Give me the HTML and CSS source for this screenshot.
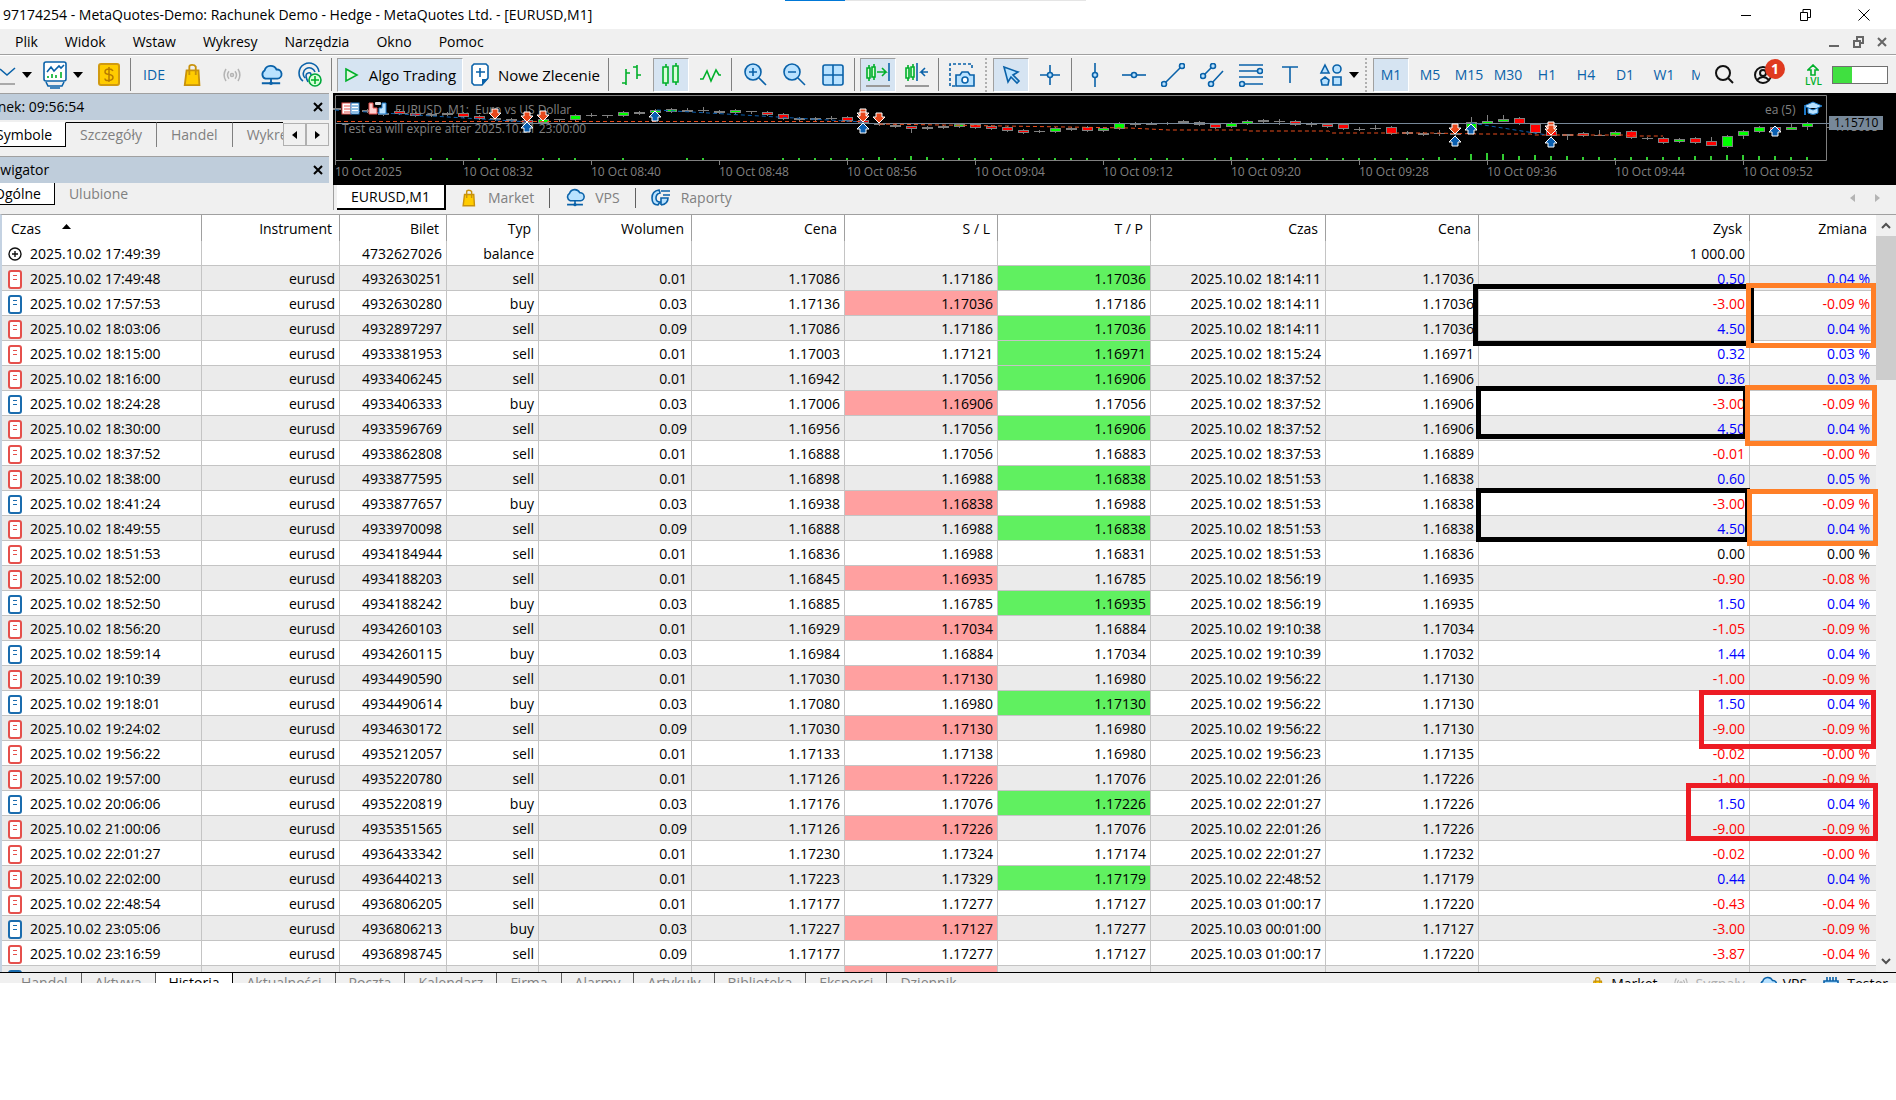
FILE: index.html
```html
<!DOCTYPE html>
<html lang="pl">
<head>
    <meta charset="UTF-8">
    <title>97174254 - MetaQuotes-Demo: Rachunek Demo - Hedge</title>
    <link rel="stylesheet" href="styles.css">
</head>
<body>
    <!-- Wspólne ikony -->
    <svg class="defs">
        <symbol id="i-bag" viewBox="0 0 24 24"><path d="M5 7h13l1 16H3z" fill="#fc0" stroke="#c8920c" stroke-width="2"/><path d="M8 12V3q0-2 3-2t4 2v9" fill="none" stroke="#c8920c" stroke-width="2"/></symbol>
        <symbol id="i-cloud" viewBox="0 0 24 24"><path d="M6 16a5 5 0 0 1-1-9 7 7 0 0 1 13-1 5 5 0 0 1 1 10z" fill="#b9e2ff" stroke="#0a62a9" stroke-width="2"/><path d="M12 16v4M2 21h20" stroke="#0a62a9" stroke-width="2"/><circle cx="12" cy="21" r="2" fill="#0a62a9"/></symbol>
        <symbol id="i-signal" viewBox="0 0 24 24"><g fill="none" stroke="#b4b4b4" stroke-width="2"><circle cx="12" cy="12" r="2"/><path d="M8 7q-4 5 0 10M16 7q4 5 0 10M4 4q-5 8 0 16M20 4q5 8 0 16"/></g></symbol>
        <symbol id="i-caret" viewBox="0 0 10 6"><path d="M0 0h10L5 6z"/></symbol>
        <symbol id="i-sell" viewBox="0 0 14 19"><rect x="1" y="1" width="12" height="17" rx="2" fill="#fff" stroke="#e5504c" stroke-width="2"/><path d="M5 5.500h4M5 9.500h4" stroke="#e5504c"/></symbol>
        <symbol id="i-buy" viewBox="0 0 14 19"><rect x="1" y="1" width="12" height="17" rx="2" fill="#fff" stroke="#1a6cae" stroke-width="2"/><path d="M5 5.500h4M5 9.500h4" stroke="#1a6cae"/></symbol>
        <symbol id="i-balance" viewBox="0 0 14 14"><circle cx="7" cy="7" r="6" fill="#fff" stroke="#111" stroke-width="1.4"/><path d="M7 4v6M4 7h6" stroke="#111" stroke-width="1.4"/></symbol>
    </svg>

    <header class="titlebar">
        <span class="strip"><i></i></span>
        <span class="title">97174254 - MetaQuotes-Demo: Rachunek Demo - Hedge - MetaQuotes Ltd. - [EURUSD,M1]</span>
        <div class="win-buttons">
            <button aria-label="Minimalizuj"><svg width="12" height="12"><path d="M1 6.500h10"/></svg></button>
            <button aria-label="Przywróć"><svg width="12" height="12"><path d="M1.500 3.500h7v8h-7zM4 3V.5h7.500v8H9"/></svg></button>
            <button aria-label="Zamknij"><svg width="12" height="12"><path d="M0.500.5l11 11M11.500.5l-11 11"/></svg></button>
        </div>
    </header>

    <nav class="menubar">
        <button>Plik</button>
        <button>Widok</button>
        <button>Wstaw</button>
        <button>Wykresy</button>
        <button>Narzędzia</button>
        <button>Okno</button>
        <button>Pomoc</button>
        <div class="mdi-buttons">
            <button aria-label="Minimalizuj wykres"><svg width="12" height="12"><path d="M1 10h10"/></svg></button>
            <button aria-label="Przywróć wykres"><svg width="12" height="12"><path d="M2 5h6v6H2zM5 4V1h6v6H9"/></svg></button>
            <button aria-label="Zamknij wykres"><svg width="12" height="12"><path d="M2 2l8 8M10 2l-8 8"/></svg></button>
        </div>
    </nav>

    <div class="toolbar">
        <button class="first" aria-label="Wykres"><svg width="16" height="28"><path d="M0 8l7 6 8-7" class="b"/><path d="M0 23h15" stroke="#aaa" stroke-width="2"/></svg><svg class="caret"><use href="#i-caret"/></svg></button>
        <button class="wide" aria-label="Nowy wykres"><svg width="24" height="30"><rect x="1" y="2" width="22" height="19" rx="2" class="b w"/><path d="M4 12l4-5 3 4 5-5 2 2 3-3" class="b"/><path d="M5 18v-2M9 18v-4M13 18v-3M18 18v-6" class="g"/><path d="M3 22l2 4h14l2-4M7 28h10" class="b"/></svg><svg class="caret"><use href="#i-caret"/></svg></button>
        <button aria-label="Instrumenty"><svg width="22" height="24"><rect x="1" y="1" width="20" height="21" rx="2" fill="#fc0" stroke="#d19a10" stroke-width="2"/><path d="M11 4v15M15 8q-1-2-4-2-4 0-4 3 0 2 4 2.500t4 3-4 3-4-2" fill="none" stroke="#b87b00" stroke-width="1.500"/></svg></button>
        <span class="sep"></span>
        <button class="ide">IDE</button>
        <button aria-label="Market"><svg width="22" height="24"><use href="#i-bag"/></svg></button>
        <button aria-label="Sygnały"><svg width="24" height="18"><use href="#i-signal"/></svg></button>
        <button aria-label="VPS"><svg width="24" height="22"><use href="#i-cloud"/></svg></button>
        <button aria-label="MQL5 ID"><svg width="26" height="26"><path d="M6 19a10 10 0 1 1 16-9M8 16a6 6 0 1 1 10-6M11 20q-4-8 0-9 3-1 3 2" class="b"/><circle cx="18" cy="18" r="6" fill="#d9ffd9" stroke="#00a83a" stroke-width="1.600"/><path d="M18 14v8M14 18h8" class="g"/></svg></button>
        <span class="sep"></span>
        <button class="text on"><svg width="16" height="18"><path d="M2 3l11 6-11 6z" fill="#dff7df" stroke="#00b02a" stroke-width="1.600"/></svg>Algo Trading</button>
        <button class="text"><svg width="18" height="23"><path d="M3 1h12l2 2v12l-6 7H3l-2-2V3z" class="b w"/><path d="M9 5v9M5 9h9" class="b"/><path d="M11 22v-6h6z" fill="#0a62a9"/></svg>Nowe Zlecenie</button>
        <span class="sep"></span>
        <button aria-label="Słupki"><svg width="24" height="24"><path d="M6 6v16M2 20h4M6 10h4M17 2v14M13 4h4M17 12h4" class="g"/></svg></button>
        <button class="on" aria-label="Świece"><svg width="24" height="24"><path d="M7 1v22M17 0v22" class="g"/><path d="M4 4h5v16H4zM14 3h5v16h-5z" class="g f"/></svg></button>
        <button aria-label="Linia"><svg width="24" height="24"><path d="M2 16h3l4-8 4 10 5-11 3 5h2" class="g"/></svg></button>
        <span class="sep"></span>
        <button aria-label="Powiększ"><svg width="24" height="24"><circle cx="10" cy="9" r="8" class="b f"/><path d="M16 15l7 7M10 5v8M6 9h8" class="b"/></svg></button>
        <button aria-label="Pomniejsz"><svg width="24" height="24"><circle cx="10" cy="9" r="8" class="b f"/><path d="M16 15l7 7M6 9h8" class="b"/></svg></button>
        <button aria-label="Siatka"><svg width="24" height="24"><rect x="2" y="2" width="20" height="20" rx="2" class="b f"/><path d="M12 2v20M2 12h20" class="b"/></svg></button>
        <span class="sep"></span>
        <button class="on" aria-label="Przewijanie"><svg width="26" height="26"><path d="M4 3v16M9 2v16M12 10h9l-4-4M21 10l-4 4" class="g"/><path d="M2 6h3v10H2zM7 5h3v10H7z" class="g f"/><path d="M24 1v18" class="b"/><path d="M1 24h24" stroke="#999" stroke-width="2"/></svg></button>
        <button aria-label="Przesunięcie"><svg width="26" height="26"><path d="M4 3v16M9 2v16" class="g"/><path d="M2 6h3v10H2zM7 5h3v10H7z" class="g f"/><path d="M13 1v18M24 10h-7l4-4M17 10l4 4" class="b"/><path d="M1 24h24" stroke="#999" stroke-width="2"/></svg></button>
        <span class="sep"></span>
        <button aria-label="Zrzut ekranu"><svg width="26" height="26"><path d="M6 24H1V2h22v6" class="b" stroke-dasharray="3 2"/><path d="M7 13h4l2-3h6l2 3h4v11H7z" class="b f"/><circle cx="16" cy="18" r="3" class="b w"/></svg></button>
        <span class="grip"></span>
        <button class="on" aria-label="Kursor"><svg width="24" height="24"><path d="M5 4l4 15 3-5 6 6 2-2-6-6 5-3z" class="b f"/></svg></button>
        <button aria-label="Krzyż"><svg width="24" height="24"><path d="M12 2v20M2 12h20" class="b"/><circle cx="12" cy="12" r="2.500" class="b f"/></svg></button>
        <span class="sep"></span>
        <button aria-label="Linia pionowa"><svg width="24" height="24"><path d="M12 0v24" class="b"/><circle cx="12" cy="12" r="2.500" class="b f"/></svg></button>
        <button aria-label="Linia pozioma"><svg width="24" height="24"><path d="M0 12h24" class="b"/><circle cx="12" cy="12" r="2.500" class="b f"/></svg></button>
        <button aria-label="Linia trendu"><svg width="24" height="24"><path d="M3 21L21 3" class="b"/><circle cx="3" cy="21" r="2.500" class="b f"/><circle cx="21" cy="3" r="2.500" class="b f"/></svg></button>
        <button aria-label="Kanał"><svg width="24" height="24"><path d="M3 13L13 3M11 21L23 8" class="b"/><circle cx="3" cy="13" r="2.500" class="b f"/><circle cx="13" cy="3" r="2.500" class="b f"/><circle cx="11" cy="21" r="2.500" class="b f"/></svg></button>
        <button aria-label="Fibonacci"><svg width="24" height="24"><path d="M0 2h24M0 8h24M0 14h24M0 21h24" class="b"/><circle cx="21" cy="8" r="2.500" class="b f"/><circle cx="3" cy="21" r="2.500" class="b f"/></svg></button>
        <button aria-label="Tekst"><svg width="24" height="24"><path d="M4 4h16M12 4v16" class="b"/></svg></button>
        <button class="shapes" aria-label="Kształty"><svg width="24" height="24"><path d="M6 2l4 8H2zM6 14l4 3-1 5H3l-1-5zM14 14h8v8h-8z" class="b f"/><circle cx="18" cy="6" r="4" class="b f"/></svg><svg class="caret"><use href="#i-caret"/></svg></button>
        <span class="grip"></span>
        <button class="tf on">M1</button>
        <button class="tf">M5</button>
        <button class="tf">M15</button>
        <button class="tf">M30</button>
        <button class="tf">H1</button>
        <button class="tf">H4</button>
        <button class="tf">D1</button>
        <button class="tf">W1</button>
        <button class="tf cut">MN</button>
        <div class="status">
            <button aria-label="Szukaj"><svg width="20" height="20"><circle cx="8" cy="8" r="7"/><path d="M13 13l5 5"/></svg></button>
            <button class="user" aria-label="Konto"><svg width="20" height="20"><circle cx="10" cy="10" r="8"/><circle cx="10" cy="8" r="3"/><path d="M4 15q6-6 12 0"/></svg><span class="badge">1</span></button>
            <div class="lvl"><svg width="12" height="12"><path d="M6 1L1 6h3v5h4V6h3z" class="g"/></svg>LVL</div>
            <div class="meter"><i></i></div>
        </div>
    </div>

    <div class="workspace">
        <aside class="dock">
            <div class="dock-title">Rynek: 09:56:54<button aria-label="Zamknij rynek"><svg width="10" height="10"><path d="M1 1l8 8M9 1l-8 8"/></svg></button></div>
            <div class="dock-tabs">
                <button class="active">Symbole</button>
                <button>Szczegóły</button>
                <button>Handel</button>
                <button class="last">Wykres</button>
                <div class="spin">
                    <button aria-label="W lewo"><svg width="5" height="8"><path d="M5 0v8L0 4z"/></svg></button>
                    <button aria-label="W prawo"><svg width="5" height="8"><path d="M0 0v8l5-4z"/></svg></button>
                </div>
            </div>
            <div class="dock-title">Nawigator<button aria-label="Zamknij nawigator"><svg width="10" height="10"><path d="M1 1l8 8M9 1l-8 8"/></svg></button></div>
            <div class="dock-tabs low">
                <button class="active">Ogólne</button>
                <button>Ulubione</button>
            </div>
        </aside>

        <main class="chart-pane">
            <div class="chart">
                <svg id="chart" width="1563" height="92"></svg>
            </div>
            <div class="chart-tabs">
                <button class="active">EURUSD,M1</button>
                <button><svg width="17" height="18"><use href="#i-bag"/></svg>Market</button>
                <button><svg width="20" height="19"><use href="#i-cloud"/></svg>VPS</button>
                <button><svg width="20" height="18"><path d="M8 1q-7 1-7 8t6 7l2-3q-4 0-4-4t4-5zM10 16V9h7q0 6-7 7M10 2h9M12 6h7" class="b f"/></svg>Raporty</button>
                <span class="pager"><svg width="30" height="8"><path d="M5 0v8L0 4zM25 0v8l5-4z" fill="#b4b4b4"/></svg></span>
            </div>
        </main>
    </div>

    <section class="history">
        <table>
            <colgroup>
                <col class="c-time"><col class="c-symbol"><col class="c-ticket"><col class="c-type">
                <col class="c-num"><col class="c-num"><col class="c-num"><col class="c-num">
                <col class="c-close"><col class="c-num"><col><col class="c-change">
            </colgroup>
            <thead>
                <tr>
                    <th>Czas <svg width="9" height="5"><path d="M0 5h9L4.500 0z"/></svg></th>
                    <th>Instrument</th>
                    <th>Bilet</th>
                    <th>Typ</th>
                    <th>Wolumen</th>
                    <th>Cena</th>
                    <th>S / L</th>
                    <th>T / P</th>
                    <th>Czas</th>
                    <th>Cena</th>
                    <th>Zysk</th>
                    <th>Zmiana</th>
                </tr>
            </thead>
            <tbody id="deals"></tbody>
        </table>
        <div class="scrollbar">
            <button aria-label="W górę"><svg width="10" height="7"><path d="M1 6l4-4 4 4"/></svg></button>
            <div class="thumb"></div>
            <button aria-label="W dół"><svg width="10" height="7"><path d="M1 1l4 4 4-4"/></svg></button>
        </div>
        <div class="mark black m1"></div>
        <div class="mark black m2"></div>
        <div class="mark black m3"></div>
        <div class="mark orange m4"></div>
        <div class="mark orange m5"></div>
        <div class="mark orange m6"></div>
        <div class="mark red m7"></div>
        <div class="mark red m8"></div>
    </section>

    <footer class="toolbox">
        <button>Handel</button>
        <button>Aktywa</button>
        <button class="active">Historia</button>
        <button>Aktualności</button>
        <button>Poczta</button>
        <button>Kalendarz</button>
        <button>Firma</button>
        <button>Alarmy</button>
        <button>Artykuły</button>
        <button>Biblioteka</button>
        <button>Eksperci</button>
        <button>Dziennik</button>
        <div class="services">
            <span><svg width="14" height="16"><use href="#i-bag"/></svg>Market</span>
            <span class="off"><svg width="18" height="14"><use href="#i-signal"/></svg>Sygnały</span>
            <span><svg width="18" height="18"><use href="#i-cloud"/></svg>VPS</span>
            <span><svg width="20" height="18"><path d="M3 5h14v12H3zM6 1v4M9 1v4M12 1v4M15 1v4" class="b f"/></svg>Tester</span>
        </div>
    </footer>

    <script src="script.js"></script>
</body>
</html>
```
FILE: styles.css
```css
* {
    box-sizing: border-box;
}
body {
    margin: 0;
    background-color: #fff;
    color: #000;
    font-family: "Open Sans", "Noto Sans", sans-serif;
    font-size: 14px;
    line-height: 20px;
    overflow: hidden;
}
button {
    padding: 0;
    border: 0;
    background: none;
    color: inherit;
    font: inherit;
    white-space: nowrap;
}
svg {
    flex: none;
    display: block;
}
.defs {
    display: none;
}
.b {
    fill: none;
    stroke: #0a62a9;
    stroke-width: 1.6;
}
.g {
    fill: none;
    stroke: #00b02a;
    stroke-width: 1.6;
}
.f {
    fill: #b9e2ff;
}
.g.f {
    fill: #d9ffd9;
}
.w {
    fill: #fff;
}

/* Pasek tytułu i menu */
.titlebar {
    position: relative;
    display: flex;
    align-items: center;
    height: 29px;
    padding: 0 26px 0 3px;
}
.strip {
    position: absolute;
    top: 0;
    left: 785px;
    width: 301px;
    height: 1px;
    background-color: #e5e5e5;
}
.strip i {
    display: block;
    width: 60px;
    height: 1px;
    background-color: #0078d7;
}
.win-buttons, .mdi-buttons {
    display: flex;
    margin-left: auto;
}
.win-buttons {
    gap: 47px;
}
.win-buttons svg {
    fill: none;
    stroke: #000;
}
.menubar {
    display: flex;
    align-items: center;
    gap: 27px;
    height: 26px;
    padding: 0 8px 0 15px;
    background-color: #f0f0f0;
    border-bottom: 1px solid #a0a0a0;
}
.mdi-buttons {
    gap: 12px;
}
.mdi-buttons svg {
    fill: none;
    stroke: #666;
    stroke-width: 2;
}

/* Pasek narzędzi */
.toolbar {
    display: flex;
    align-items: center;
    gap: 3px;
    height: 38px;
    background-color: #f0f0f0;
    border-top: 1px solid #fff;
}
.toolbar > button {
    display: flex;
    flex: none;
    align-items: center;
    justify-content: center;
    gap: 6px;
    width: 36px;
    height: 34px;
}
.toolbar > .first {
    width: 35px;
    justify-content: flex-start;
}
.toolbar > .wide {
    width: 50px;
}
.toolbar > .shapes {
    width: 49px;
    padding-left: 6px;
}
.toolbar > .text {
    gap: 9px;
    width: 126px;
    font-size: 15px;
}
.toolbar > .text + .text {
    width: 139px;
}
.toolbar > .on {
    background-color: #d6e4f2;
    border: 1px solid #a0a0a0;
    border-right-color: #fff;
    border-bottom-color: #fff;
}
.toolbar .caret {
    width: 10px;
    height: 6px;
}
.sep {
    flex: none;
    width: 3px;
    height: 33px;
    border-left: 1px solid #808080;
}
.grip {
    flex: none;
    width: 3px;
    height: 34px;
    margin: 0 2px;
    border-left: 2px dotted #b0b0b0;
}
.ide, .tf {
    color: #0a62a9;
}
.toolbar > .cut {
    width: 9px;
    margin-left: 6px;
    overflow: hidden;
    justify-content: flex-start;
}
.status {
    display: flex;
    align-items: center;
    margin-left: auto;
    padding-right: 8px;
}
.status button svg {
    fill: none;
    stroke: #111;
    stroke-width: 2;
}
.user {
    position: relative;
    margin: 0 32px 0 18px;
}
.badge {
    position: absolute;
    top: -6px;
    left: 12px;
    width: 20px;
    height: 20px;
    border-radius: 10px;
    background-color: #e03a20;
    color: #fff;
    font-weight: bold;
}
.lvl {
    display: flex;
    flex-direction: column;
    align-items: center;
    margin-right: 10px;
    color: #00b02a;
    font-size: 10px;
    font-weight: 600;
    line-height: 10px;
}
.meter {
    width: 56px;
    height: 18px;
    border: 1px solid #707070;
    background-color: #fff;
}
.meter i {
    display: block;
    width: 35%;
    height: 100%;
    background-color: #40e040;
}

/* Panele i wykres */
.workspace {
    display: flex;
    height: 121px;
    background-color: #f0f0f0;
    overflow: hidden;
}
.dock {
    flex: none;
    width: 353px;
    margin-left: -24px;
}
.dock-title {
    display: flex;
    align-items: center;
    justify-content: space-between;
    height: 27px;
    padding: 0 6px;
    background-color: #bfcddb;
    border-top: 1px solid #a0a0a0;
}
.dock-title svg {
    fill: none;
    stroke: #000;
    stroke-width: 2;
}
.dock-tabs {
    display: flex;
    align-items: flex-start;
    height: 36px;
    padding-top: 2px;
    color: #808080;
}
.dock-tabs > button {
    height: 25px;
    padding: 0 14px;
    border-top: 1px solid #000;
    border-right: 1px solid #808080;
}
.dock-tabs > .active {
    padding: 0 13px 0 19px;
    background-color: #fff;
    border: 1px solid #000;
    border-top-color: #fff;
    color: #000;
}
.dock-tabs .last {
    flex: 1;
    width: 0;
    padding-right: 0;
    border-right: 0;
    overflow: hidden;
    text-align: left;
}
.spin {
    display: flex;
    margin-top: 1px;
}
.spin button {
    display: flex;
    align-items: center;
    justify-content: center;
    width: 23px;
    height: 23px;
    border: 1px solid #b0b0b0;
}
.low {
    padding-top: 0;
}
.low > button {
    height: 22px;
    border-top: 0;
    border-right: 0;
}
.dock-tabs.low > .active {
    padding-left: 17px;
    border-top: 0;
}
.chart-pane {
    flex: 1;
    min-width: 0;
    margin-left: 4px;
}
.chart {
    height: 92px;
    background-color: #000;
    overflow: hidden;
}
.chart text {
    fill: #808080;
    font-size: 12px;
}
.chart .price {
    fill: #000;
}
.chart-tabs {
    display: flex;
    align-items: center;
    height: 25px;
    border-left: 1px solid #a0a0a0;
    color: #808080;
    padding: 0 16px 0 3px;
}
.chart-tabs button {
    display: flex;
    align-items: center;
    gap: 10px;
    height: 20px;
    padding: 0 15px;
    border-right: 1px solid #606060;
}
.chart-tabs button:nth-of-type(4) {
    border-right: 0;
}
.chart-tabs .active {
    height: 25px;
    padding: 0 14px;
    background-color: #fff;
    border-right: 2px solid #000;
    border-bottom: 2px solid #000;
    color: #000;
}
.pager {
    margin-left: auto;
}

/* Historia transakcji */
.history {
    position: relative;
    display: flex;
    max-height: 758px;
    overflow: hidden;
    border-top: 1px solid #a0a0a0;
    border-left: 2px solid #c4d2e2;
}
.history table {
    flex: 1;
    table-layout: fixed;
    border-collapse: separate;
    border-spacing: 0;
    text-align: right;
}
.c-time { width: 200px; }
.c-symbol { width: 138px; }
.c-ticket { width: 107px; }
.c-type { width: 92px; }
.c-num { width: 153px; }
.c-close { width: 175px; }
.c-change { width: 126px; }
.history th {
    height: 26px;
    padding: 2px 7px 0 9px;
    border-right: 1px solid #a0a0a0;
    font-weight: normal;
}
.history th:first-child {
    text-align: left;
}
.history th svg {
    display: inline-block;
    margin: 0 0 5px 18px;
}
.history td {
    height: 25px;
    padding: 2px 4px 0 6px;
    border-right: 1px solid #c4c4c4;
    border-bottom: 1px solid #c4c4c4;
    white-space: nowrap;
}
.history th:last-child {
    padding-right: 9px;
    border-right: 0;
}
.history td:last-child {
    padding-right: 6px;
    border-right: 0;
}
.history tr:nth-child(even) td {
    background-color: #ebebeb;
}
.history .deal-time {
    display: flex;
    align-items: center;
    gap: 8px;
}
.history tr:nth-child(n) .sl-hit {
    background-color: #ffa0a0;
}
.history tr:nth-child(n) .tp-hit {
    background-color: #60f060;
}
.plus {
    color: #00f;
}
.minus {
    color: #f00;
}
.scrollbar {
    display: flex;
    flex-direction: column;
    width: 20px;
    max-height: 757px;
    background-color: #f0f0f0;
}
.scrollbar button {
    display: flex;
    align-items: center;
    justify-content: center;
    height: 21px;
}
.scrollbar button:last-child {
    margin-top: auto;
}
.scrollbar svg {
    fill: none;
    stroke: #505050;
    stroke-width: 2;
}
.thumb {
    height: 144px;
    background-color: #cdcdcd;
}

/* Zaznaczenia na tabeli */
.mark {
    position: absolute;
    border: 5px solid;
}
.black { border-color: #000; }
.orange { border-color: #ff7f27; }
.red { border-color: #ed1c24; }
.m1 { top: 69px; right: 142px; width: 281px; height: 62px; }
.m2 { top: 171px; right: 148px; width: 272px; height: 53px; }
.m3 { top: 273px; right: 146px; width: 274px; height: 54px; }
.m4 { top: 68px; right: 20px; width: 130px; height: 65px; }
.m5 { top: 170px; right: 19px; width: 132px; height: 61px; }
.m6 { top: 274px; right: 18px; width: 131px; height: 57px; }
.m7 { top: 475px; right: 20px; width: 177px; height: 59px; }
.m8 { top: 568px; right: 18px; width: 192px; height: 58px; }

/* Dolne zakładki, ucięte krawędzią okna */
.toolbox {
    display: flex;
    align-items: flex-start;
    height: 11px;
    padding-left: 8px;
    overflow: hidden;
    background-color: #f0f0f0;
    border-top: 1px solid #000;
    color: #808080;
}
.toolbox > button {
    height: 20px;
    padding: 0 13px;
    border-right: 1px solid #606060;
}
.toolbox > .active {
    background-color: #fff;
    border-right-color: #000;
    color: #000;
}
.toolbox > button:nth-child(12) {
    border-right: 0;
}
.services {
    display: flex;
    gap: 14px;
    margin-left: auto;
    padding: 1px 8px 0 0;
    color: #000;
}
.services span {
    display: flex;
    gap: 6px;
}
.services svg {
    margin-top: 2px;
}
.services .off {
    color: #b0b0b0;
}
```
FILE: script.js
```js
// czas | bilet | typ | wolumen | cena | S/L | T/P | czas zamknięcia | cena | zysk | zmiana
const deals = `
2025.10.02 17:49:39|4732627026|balance||||||| 1 000.00|
2025.10.02 17:49:48|4932630251|sell|0.01|1.17086|1.17186|1.17036|2025.10.02 18:14:11|1.17036|0.50|0.04
2025.10.02 17:57:53|4932630280|buy|0.03|1.17136|1.17036|1.17186|2025.10.02 18:14:11|1.17036|-3.00|-0.09
2025.10.02 18:03:06|4932897297|sell|0.09|1.17086|1.17186|1.17036|2025.10.02 18:14:11|1.17036|4.50|0.04
2025.10.02 18:15:00|4933381953|sell|0.01|1.17003|1.17121|1.16971|2025.10.02 18:15:24|1.16971|0.32|0.03
2025.10.02 18:16:00|4933406245|sell|0.01|1.16942|1.17056|1.16906|2025.10.02 18:37:52|1.16906|0.36|0.03
2025.10.02 18:24:28|4933406333|buy|0.03|1.17006|1.16906|1.17056|2025.10.02 18:37:52|1.16906|-3.00|-0.09
2025.10.02 18:30:00|4933596769|sell|0.09|1.16956|1.17056|1.16906|2025.10.02 18:37:52|1.16906|4.50|0.04
2025.10.02 18:37:52|4933862808|sell|0.01|1.16888|1.17056|1.16883|2025.10.02 18:37:53|1.16889|-0.01|-0.00
2025.10.02 18:38:00|4933877595|sell|0.01|1.16898|1.16988|1.16838|2025.10.02 18:51:53|1.16838|0.60|0.05
2025.10.02 18:41:24|4933877657|buy|0.03|1.16938|1.16838|1.16988|2025.10.02 18:51:53|1.16838|-3.00|-0.09
2025.10.02 18:49:55|4933970098|sell|0.09|1.16888|1.16988|1.16838|2025.10.02 18:51:53|1.16838|4.50|0.04
2025.10.02 18:51:53|4934184944|sell|0.01|1.16836|1.16988|1.16831|2025.10.02 18:51:53|1.16836|0.00|0.00
2025.10.02 18:52:00|4934188203|sell|0.01|1.16845|1.16935|1.16785|2025.10.02 18:56:19|1.16935|-0.90|-0.08
2025.10.02 18:52:50|4934188242|buy|0.03|1.16885|1.16785|1.16935|2025.10.02 18:56:19|1.16935|1.50|0.04
2025.10.02 18:56:20|4934260103|sell|0.01|1.16929|1.17034|1.16884|2025.10.02 19:10:38|1.17034|-1.05|-0.09
2025.10.02 18:59:14|4934260115|buy|0.03|1.16984|1.16884|1.17034|2025.10.02 19:10:39|1.17032|1.44|0.04
2025.10.02 19:10:39|4934490590|sell|0.01|1.17030|1.17130|1.16980|2025.10.02 19:56:22|1.17130|-1.00|-0.09
2025.10.02 19:18:01|4934490614|buy|0.03|1.17080|1.16980|1.17130|2025.10.02 19:56:22|1.17130|1.50|0.04
2025.10.02 19:24:02|4934630172|sell|0.09|1.17030|1.17130|1.16980|2025.10.02 19:56:22|1.17130|-9.00|-0.09
2025.10.02 19:56:22|4935212057|sell|0.01|1.17133|1.17138|1.16980|2025.10.02 19:56:23|1.17135|-0.02|-0.00
2025.10.02 19:57:00|4935220780|sell|0.01|1.17126|1.17226|1.17076|2025.10.02 22:01:26|1.17226|-1.00|-0.09
2025.10.02 20:06:06|4935220819|buy|0.03|1.17176|1.17076|1.17226|2025.10.02 22:01:27|1.17226|1.50|0.04
2025.10.02 21:00:06|4935351565|sell|0.09|1.17126|1.17226|1.17076|2025.10.02 22:01:26|1.17226|-9.00|-0.09
2025.10.02 22:01:27|4936433342|sell|0.01|1.17230|1.17324|1.17174|2025.10.02 22:01:27|1.17232|-0.02|-0.00
2025.10.02 22:02:00|4936440213|sell|0.01|1.17223|1.17329|1.17179|2025.10.02 22:48:52|1.17179|0.44|0.04
2025.10.02 22:48:54|4936806205|sell|0.01|1.17177|1.17277|1.17127|2025.10.03 01:00:17|1.17220|-0.43|-0.04
2025.10.02 23:05:06|4936806213|buy|0.03|1.17227|1.17127|1.17277|2025.10.03 00:01:00|1.17127|-3.00|-0.09
2025.10.02 23:16:59|4936898745|sell|0.09|1.17177|1.17277|1.17127|2025.10.03 01:00:17|1.17220|-3.87|-0.04
2025.10.03 00:01:00|4937104512|buy|0.03|1.17127|1.17027|1.17177|2025.10.03 01:12:40|1.17027|-3.00|-0.09
`.trim().split('\n').map(line => line.split('|'));

function signClass(value) {
    const n = parseFloat(value);
    return n > 0 ? 'plus' : n < 0 || value.startsWith('-') ? 'minus' : '';
}

function fillDeals() {
    document.getElementById('deals').innerHTML = deals.map(d => {
        const [time, ticket, type, volume, price, sl, tp, closeTime, close, profit, change] = d;
        const isBalance = type === 'balance';
        const size = isBalance ? 'width="14" height="14"' : 'width="14" height="19"';
        return `
            <tr>
                <td><div class="deal-time"><svg ${size}><use href="#i-${type}"/></svg>${time}</div></td>
                <td>${isBalance ? '' : 'eurusd'}</td>
                <td>${ticket}</td>
                <td>${type}</td>
                <td>${volume}</td>
                <td>${price}</td>
                <td class="${sl && sl === close ? 'sl-hit' : ''}">${sl}</td>
                <td class="${tp && tp === close ? 'tp-hit' : ''}">${tp}</td>
                <td>${closeTime}</td>
                <td>${close}</td>
                <td class="${isBalance ? '' : signClass(profit)}">${profit}</td>
                <td class="${signClass(change)}">${change ? change + ' %' : ''}</td>
            </tr>`;
    }).join('');
}

// świeca: kolor (g, r, n), góra, wysokość, opcjonalnie zakres knota
const candles = `n15,2 n16,2 n17,2 n20,2 r18,3 r20,3 n21,2 n20,2 r20,4 r23,3 n25,2 n26,2 r27,3 g26,4 n26,1,26,29
g22,5,21,28 n22,1,20,24 n22,1,22,25 g19,4 n19,2 g17,3 g16,3 n17,2,15,19 n17,1,14,20 n18,2 g17,3 n18,1,18,21 r19,3 r21,5 n25,2
n25,2 n25,1,23,27 r24,4 r27,3 n30,2 n32,2 r33,3,33,40 n34,2 n33,2 g31,3 r31,4 r33,3 r34,4 r37,3 n38,1,37,40
g35,4 n35,2 r34,4 g35,3 g30,6 n31,1,29,34 n31,1,29,32 n30,1,29,32 n28,2 r29,3 r31,4 g30,4 g28,3 n27,2 n28,1,26,32
r28,4 n31,1,29,34 r31,3 r31,5 n36,1,34,38 n35,1,32,37 r34,7 n39,2 n40,2 n40,1,37,43 n40,2 g29,7,24,36 g28,3,22,31 g26,3,22,29 r25,6
r31,9 r38,5 n41,2,41,47 r40,3 n42,1,37,43 g39,4 r38,7 n45,1,44,47 r45,5 g46,3 r45,5 r48,5,44,53 g43,11 g38,5,37,46
g34,5 r34,4 g34,3,31,37 g30,4,29,37`.split(/\s+/);

const volumes = '020200220220022200200022000022222232432222022222022222023222222222222326764544332333344554433'.split('');

// znaczniki transakcji: numer świecy i wierzchołek grota
const sells = [[10, 26], [12, 29], [13, 28], [33, 26], [33, 29], [34, 30], [70, 41], [76, 39], [76, 42]];
const buys = [[12, 29], [20, 18], [33, 30], [70, 43], [71, 31], [76, 44], [90, 33]];

const hours = ['2025', '08:32', '08:40', '08:48', '08:56', '09:04', '09:12', '09:20', '09:28', '09:36', '09:44', '09:52'];
const colors = { g: '#00ff00', r: '#ff0000', n: '#808080' };
const candleX = i => 2 + i * 16;

function drawChart() {
    let out = '<path d="M2.500 67V2.500H1493.500V67.500H2.500" fill="none" stroke="#808080"/>';

    hours.forEach((label, i) => {
        const x = 2 + i * 128;
        out += `<path d="M${x + 0.5} 67v5" stroke="#808080"/><text x="${x}" y="83">10 Oct ${label}</text>`;
    });

    volumes.forEach((v, i) => {
        if (v > 0) out += `<path d="M${candleX(i)} 67v-${v}" stroke="#32cd32" stroke-width="2"/>`;
    });

    out += '<text x="62" y="21" xml:space="preserve">EURUSD, M1:  Euro vs US Dollar</text>';
    out += '<text x="9" y="40">Test ea will expire after 2025.10.31 23:00:00</text>';
    out += '<text x="1432" y="21">ea (5)</text>';

    candles.forEach((c, i) => {
        const [y, h, wickTop, wickEnd] = c.slice(1).split(',').map(Number);
        const x = candleX(i);
        const top = wickTop === undefined ? y - 1 : wickTop;
        const end = wickEnd === undefined ? y + h + 1 : wickEnd;
        out += `<path d="M${x + 0.5} ${top}V${end}" stroke="#808080"/>`;
        out += `<rect x="${x - 5}" y="${y}" width="11" height="${h}" fill="#808080"/>`;
        if (c[0] !== 'n') out += `<rect x="${x - 4}" y="${y + 1}" width="9" height="${Math.max(h - 2, 1)}" fill="${colors[c[0]]}"/>`;
    });

    out += '<path d="M2 30.500H1497" stroke="#778899"/>';
    out += '<path d="M4 28.500H530M546 31l250 4 40 2h80v1h80l2 2h100l50 1h50l2 1h90l10 1h30" fill="none" stroke="#e84c1c" stroke-dasharray="4 3"/>';
    out += '<path d="M2 17L196 29M324 17l206 12M1138 30l76 12" stroke="#0a5fb0" stroke-dasharray="4 3"/>';

    sells.forEach(([i, y]) => {
        out += `<path d="M${candleX(i)} ${y}l-6-6h3v-4h6v4h3z" fill="#e8481c" stroke="#fff"/>`;
    });
    buys.forEach(([i, y]) => {
        out += `<path d="M${candleX(i)} ${y}l-6 6h3v4h6v-4h3z" fill="#0a5fb0" stroke="#fff"/>`;
    });

    // ikony obok nazwy instrumentu
    out += '<rect x="9" y="10" width="9" height="11" fill="#fff" stroke="#e5504c"/><rect x="18" y="10" width="8" height="11" fill="#fff" stroke="#1a78c8"/>';
    out += '<path d="M11 13h6M11 16h6M11 19h6" stroke="#e5504c"/><path d="M19 13h6M19 16h6M19 19h6" stroke="#1a78c8"/>';
    out += '<path d="M36 10h4v5h4v6h-8z" fill="#ffd0d0" stroke="#e5504c"/><path d="M53 10h-4v5h-3v6h7z" fill="#b9e2ff" stroke="#1a78c8"/><rect x="42" y="9" width="6" height="3" rx="1" fill="#ddd"/>';
    out += '<path d="M1471 13l9-4 9 4-9 4zM1475 15v5q5 3 10 0v-5" fill="#b9e2ff" stroke="#1a78c8"/><path d="M1472 14v8" stroke="#1a78c8" stroke-width="2"/>';

    out += '<path d="M1494 34.500h4" stroke="#808080"/><text x="1501" y="38">1.15695</text>';
    out += '<rect x="1496" y="23" width="54" height="14" fill="#778899"/><text x="1501" y="34" class="price">1.15710</text>';
    document.getElementById('chart').innerHTML = out;
}

fillDeals();
drawChart();
```
